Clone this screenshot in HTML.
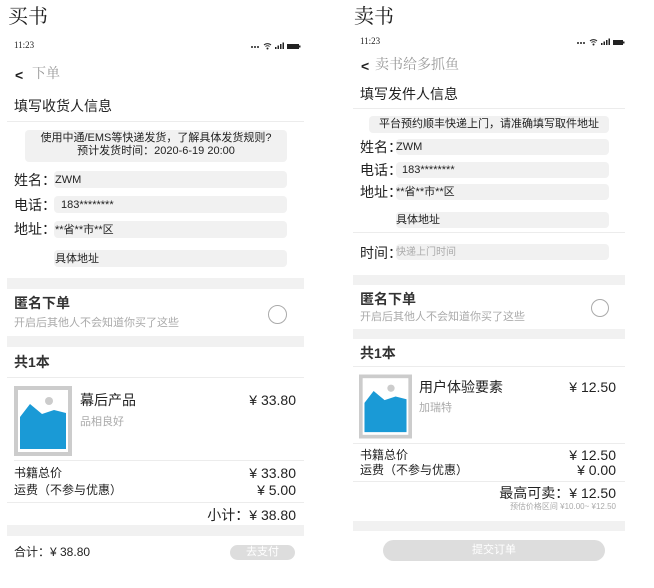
<!DOCTYPE html>
<html><head><meta charset="utf-8"><style>
*{margin:0;padding:0;box-sizing:border-box}
body{width:654px;height:588px;background:#fff;position:relative;overflow:hidden;font-family:"Liberation Sans","Noto Sans CJK SC",sans-serif;color:#222}
.a{position:absolute;white-space:nowrap}
.t{line-height:1}
.g{background:#f1f1f1}
.in{position:absolute;background:#f1f1f1;border-radius:4px}
.ln{position:absolute;height:1px;background:#ececec}
.gr{color:#aaa}
.serif{font-family:"Liberation Serif","Noto Serif CJK SC",serif}
.r{text-align:right}
</style></head><body>

<!-- LEFT -->
<div class="a t serif" style="left:8px;top:7px;font-size:20px">买书</div>
<div class="a t serif" style="left:14px;top:41px;font-size:9px">11:23</div>
<svg class="a" style="left:250px;top:42px" width="54" height="8" viewBox="0 0 54 8"><circle cx="2" cy="5" r="1" fill="#222"/><circle cx="5" cy="5" r="1" fill="#222"/><circle cx="8" cy="5" r="1" fill="#222"/><path d="M14 3a5 5 0 0 1 7 0M15.5 4.5a3 3 0 0 1 4 0" stroke="#222" stroke-width="1" fill="none"/><circle cx="17.5" cy="6.5" r="1" fill="#222"/><rect x="25" y="5" width="1.5" height="2" fill="#222"/><rect x="27.5" y="3.5" width="1.5" height="3.5" fill="#222"/><rect x="30" y="2" width="1.5" height="5" fill="#222"/><rect x="32.5" y="0.5" width="1.5" height="6.5" fill="#222"/><rect x="37" y="2" width="12" height="5" fill="#222"/><rect x="49" y="3.5" width="1.5" height="2" fill="#222"/></svg>
<div class="a t" style="left:15px;top:68px;font-size:14px;font-weight:bold">&lt;</div>
<div class="a t serif gr" style="left:32px;top:68px;font-size:14px;color:#999">下单</div>
<div class="a t" style="left:14px;top:99px;font-size:14px">填写收货人信息</div>
<div class="ln" style="left:7px;top:121px;width:297px"></div>
<div class="in" style="left:25px;top:130px;width:262px;height:32px"></div>
<div class="a t" style="left:25px;top:132px;width:262px;text-align:center;font-size:11px;line-height:13px;white-space:normal">使用中通/EMS等快递发货，了解具体发货规则?<br>预计发货时间：2020-6-19 20:00</div>
<div class="a t" style="left:14px;top:173px;font-size:14px">姓名：</div>
<div class="in" style="left:54px;top:171px;width:233px;height:17px"></div>
<div class="a t" style="left:55px;top:175px;font-size:11px">ZWM</div>
<div class="a t" style="left:14px;top:198px;font-size:14px">电话：</div>
<div class="in" style="left:54px;top:196px;width:233px;height:17px"></div>
<div class="a t" style="left:61px;top:200px;font-size:11px">183********</div>
<div class="a t" style="left:14px;top:222px;font-size:14px">地址：</div>
<div class="in" style="left:54px;top:221px;width:233px;height:17px"></div>
<div class="a t" style="left:55px;top:225px;font-size:11px">**省**市**区</div>
<div class="in" style="left:54px;top:250px;width:233px;height:17px"></div>
<div class="a t" style="left:55px;top:254px;font-size:11px">具体地址</div>
<div class="a g" style="left:7px;top:278px;width:297px;height:11px"></div>
<div class="a t" style="left:14px;top:296px;font-size:14px;font-weight:bold;color:#333">匿名下单</div>
<div class="a t gr" style="left:14px;top:318px;font-size:11px">开启后其他人不会知道你买了这些</div>
<div class="a" style="left:268px;top:305px;width:19px;height:19px;border:1px solid #aaa;border-radius:50%"></div>
<div class="a g" style="left:7px;top:336px;width:297px;height:11px"></div>
<div class="a t" style="left:14px;top:355px;font-size:14px;font-weight:bold;color:#333">共1本</div>
<div class="ln" style="left:7px;top:377px;width:297px"></div>
<svg class="a" style="left:14px;top:386px" width="58" height="70" viewBox="0 0 58 70"><rect width="58" height="70" fill="#ccc"/><rect x="4" y="4" width="50" height="62" fill="#fff"/><circle cx="35" cy="15" r="4" fill="#ccc"/><path d="M6 31 L16 18 L28 28 L40 24 L52 27 L52 63 L6 63Z" fill="#1a9ad6"/></svg>
<div class="a t" style="left:80px;top:393px;font-size:14px">幕后产品</div>
<div class="a t gr" style="left:80px;top:417px;font-size:11px">品相良好</div>
<div class="a t r" style="left:216px;top:393px;width:80px;font-size:14px">¥ 33.80</div>
<div class="ln" style="left:14px;top:460px;width:290px"></div>
<div class="a t" style="left:14px;top:467px;font-size:12px">书籍总价</div>
<div class="a t" style="left:14px;top:484px;font-size:12px">运费（不参与优惠）</div>
<div class="a t r" style="left:216px;top:466px;width:80px;font-size:14px">¥ 33.80</div>
<div class="a t r" style="left:216px;top:483px;width:80px;font-size:14px">¥ 5.00</div>
<div class="ln" style="left:7px;top:502px;width:297px"></div>
<div class="a t r" style="left:176px;top:508px;width:120px;font-size:14px">小计：¥ 38.80</div>
<div class="a g" style="left:7px;top:525px;width:297px;height:11px"></div>
<div class="a t" style="left:14px;top:546px;font-size:12px">合计：¥ 38.80</div>
<div class="a t" style="left:230px;top:545px;width:65px;height:15px;background:#ddd;border-radius:8px;color:#fff;font-size:11px;line-height:15px;text-align:center">去支付</div>

<!-- RIGHT -->
<div class="a t serif" style="left:354px;top:7px;font-size:20px">卖书</div>
<div class="a t serif" style="left:360px;top:37px;font-size:9px">11:23</div>
<svg class="a" style="left:576px;top:38px" width="54" height="8" viewBox="0 0 54 8"><circle cx="2" cy="5" r="1" fill="#222"/><circle cx="5" cy="5" r="1" fill="#222"/><circle cx="8" cy="5" r="1" fill="#222"/><path d="M14 3a5 5 0 0 1 7 0M15.5 4.5a3 3 0 0 1 4 0" stroke="#222" stroke-width="1" fill="none"/><circle cx="17.5" cy="6.5" r="1" fill="#222"/><rect x="25" y="5" width="1.5" height="2" fill="#222"/><rect x="27.5" y="3.5" width="1.5" height="3.5" fill="#222"/><rect x="30" y="2" width="1.5" height="5" fill="#222"/><rect x="32.5" y="0.5" width="1.5" height="6.5" fill="#222"/><rect x="37" y="2" width="10" height="5" fill="#222"/><rect x="47" y="3.5" width="1.5" height="2" fill="#222"/></svg>
<div class="a t" style="left:361px;top:59px;font-size:14px;font-weight:bold">&lt;</div>
<div class="a t serif" style="left:375px;top:59px;font-size:14px;color:#999">卖书给多抓鱼</div>
<div class="a t" style="left:360px;top:87px;font-size:14px">填写发件人信息</div>
<div class="ln" style="left:353px;top:108px;width:272px"></div>
<div class="in" style="left:369px;top:116px;width:240px;height:17px"></div>
<div class="a t" style="left:369px;top:119px;width:240px;text-align:center;font-size:11px">平台预约顺丰快递上门，请准确填写取件地址</div>
<div class="a t" style="left:360px;top:140px;font-size:14px">姓名：</div>
<div class="in" style="left:396px;top:139px;width:213px;height:16px"></div>
<div class="a t" style="left:396px;top:142px;font-size:11px">ZWM</div>
<div class="a t" style="left:360px;top:163px;font-size:14px">电话：</div>
<div class="in" style="left:396px;top:162px;width:213px;height:16px"></div>
<div class="a t" style="left:402px;top:165px;font-size:11px">183********</div>
<div class="a t" style="left:360px;top:185px;font-size:14px">地址：</div>
<div class="in" style="left:396px;top:184px;width:213px;height:16px"></div>
<div class="a t" style="left:396px;top:187px;font-size:11px">**省**市**区</div>
<div class="in" style="left:396px;top:212px;width:213px;height:16px"></div>
<div class="a t" style="left:396px;top:215px;font-size:11px">具体地址</div>
<div class="ln" style="left:353px;top:232px;width:272px"></div>
<div class="a t" style="left:360px;top:246px;font-size:14px">时间：</div>
<div class="in" style="left:396px;top:244px;width:213px;height:16px"></div>
<div class="a t gr" style="left:396px;top:248px;font-size:10px">快递上门时间</div>
<div class="a g" style="left:353px;top:275px;width:272px;height:10px"></div>
<div class="a t" style="left:360px;top:292px;font-size:14px;font-weight:bold;color:#333">匿名下单</div>
<div class="a t gr" style="left:360px;top:312px;font-size:11px">开启后其他人不会知道你买了这些</div>
<div class="a" style="left:591px;top:299px;width:18px;height:18px;border:1px solid #aaa;border-radius:50%"></div>
<div class="a g" style="left:353px;top:329px;width:272px;height:10px"></div>
<div class="a t" style="left:360px;top:346px;font-size:14px;font-weight:bold;color:#333">共1本</div>
<div class="ln" style="left:353px;top:366px;width:272px"></div>
<svg class="a" style="left:359px;top:374px" width="53" height="65" viewBox="0 0 58 70"><rect width="58" height="70" fill="#ccc"/><rect x="4" y="4" width="50" height="62" fill="#fff"/><circle cx="35" cy="15" r="4" fill="#ccc"/><path d="M6 31 L16 18 L28 28 L40 24 L52 27 L52 63 L6 63Z" fill="#1a9ad6"/></svg>
<div class="a t" style="left:419px;top:380px;font-size:14px">用户体验要素</div>
<div class="a t gr" style="left:419px;top:403px;font-size:11px">加瑞特</div>
<div class="a t r" style="left:532px;top:380px;width:84px;font-size:14px">¥ 12.50</div>
<div class="ln" style="left:353px;top:443px;width:272px"></div>
<div class="a t" style="left:360px;top:449px;font-size:12px">书籍总价</div>
<div class="a t" style="left:360px;top:464px;font-size:12px">运费（不参与优惠）</div>
<div class="a t r" style="left:532px;top:448px;width:84px;font-size:14px">¥ 12.50</div>
<div class="a t r" style="left:532px;top:463px;width:84px;font-size:14px">¥ 0.00</div>
<div class="ln" style="left:353px;top:481px;width:272px"></div>
<div class="a t r" style="left:466px;top:486px;width:150px;font-size:14px">最高可卖：¥ 12.50</div>
<div class="a t r gr" style="left:446px;top:503px;width:170px;font-size:8px">预估价格区间 ¥10.00~ ¥12.50</div>
<div class="a g" style="left:353px;top:521px;width:272px;height:10px"></div>
<div class="a t" style="left:383px;top:540px;width:222px;height:21px;background:#ddd;border-radius:11px;color:#fff;font-size:11px;line-height:21px;text-align:center">提交订单</div>
</body></html>
